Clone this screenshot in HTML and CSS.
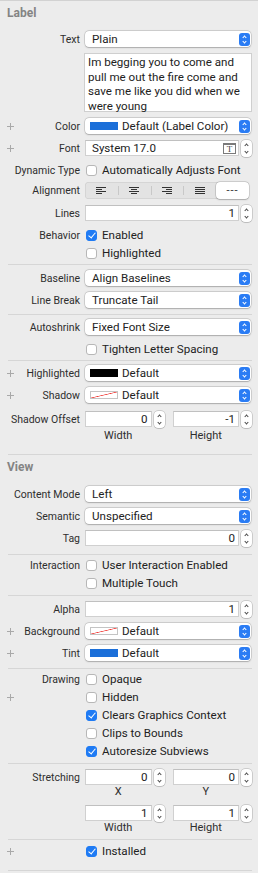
FILE: index.html
```html
<!DOCTYPE html>
<html lang="en">
<head>
    <meta charset="UTF-8">
    <meta name="viewport" content="width=device-width, initial-scale=1.0">
    <title>Attributes Inspector</title>
    <link rel="stylesheet" href="styles.css">
</head>
<body>
<div class="panel">
    <!-- Label section -->
    <div class="group g-label">
        <div class="header">Label</div>
        <div class="row">
            <div class="lbl">Text</div>
            <div class="popup"><span class="val">Plain</span><span class="updown"></span></div>
        </div>
        <div class="textbox">Im begging you to come and pull me out the fire come and save me like you did when we were young</div>
        <div class="row gap3">
            <div class="lbl"><i class="plus"></i>Color</div>
            <div class="popup color"><span class="swatch blue"></span><span class="val">Default (Label Color)</span><span class="updown"></span></div>
        </div>
        <div class="row">
            <div class="lbl"><i class="plus"></i>Font</div>
            <div class="field font"><span>System 17.0</span><span class="t-icon">T</span></div>
            <span class="stepper"></span>
        </div>
        <div class="row">
            <div class="lbl">Dynamic Type</div>
            <span class="box"></span><span class="val">Automatically Adjusts Font</span>
        </div>
        <div class="row short">
            <div class="lbl">Alignment</div>
            <div class="seg">
                <span class="seg-item">
                    <svg width="10" height="7" viewBox="0 0 10 7"><path d="M0 .5h10M0 2.5h6M0 4.5h10M0 6.5h6" stroke="#333" stroke-width="1"/></svg>
                </span>
                <span class="seg-item">
                    <svg width="10" height="7" viewBox="0 0 10 7"><path d="M0 .5h10M2 2.5h6M0 4.5h10M2 6.5h6" stroke="#333" stroke-width="1"/></svg>
                </span>
                <span class="seg-item">
                    <svg width="10" height="7" viewBox="0 0 10 7"><path d="M0 .5h10M4 2.5h6M0 4.5h10M4 6.5h6" stroke="#333" stroke-width="1"/></svg>
                </span>
                <span class="seg-item">
                    <svg width="10" height="7" viewBox="0 0 10 7"><path d="M0 .5h10M0 2.5h10M0 4.5h10M0 6.5h10" stroke="#333" stroke-width="1"/></svg>
                </span>
                <span class="seg-item selected">---</span>
            </div>
        </div>
        <div class="row gap3">
            <div class="lbl">Lines</div>
            <div class="field">1</div>
            <span class="stepper"></span>
        </div>
        <div class="row check gap2">
            <div class="lbl">Behavior</div>
            <span class="box on"></span><span class="val">Enabled</span>
        </div>
        <div class="row check">
            <div class="lbl"></div>
            <span class="box"></span><span class="val">Highlighted</span>
        </div>
    </div>
    <div class="sep"></div>

    <div class="group g-baseline">
        <div class="row">
            <div class="lbl">Baseline</div>
            <div class="popup"><span class="val">Align Baselines</span><span class="updown"></span></div>
        </div>
        <div class="row">
            <div class="lbl">Line Break</div>
            <div class="popup"><span class="val">Truncate Tail</span><span class="updown"></span></div>
        </div>
    </div>
    <div class="sep"></div>

    <div class="group g-shrink">
        <div class="row">
            <div class="lbl">Autoshrink</div>
            <div class="popup"><span class="val">Fixed Font Size</span><span class="updown"></span></div>
        </div>
        <div class="row">
            <div class="lbl"></div>
            <span class="box"></span><span class="val">Tighten Letter Spacing</span>
        </div>
    </div>
    <div class="sep"></div>

    <div class="group g-shadow">
        <div class="row">
            <div class="lbl"><i class="plus"></i>Highlighted</div>
            <div class="popup color"><span class="swatch black"></span><span class="val">Default</span><span class="updown"></span></div>
        </div>
        <div class="row">
            <div class="lbl"><i class="plus"></i>Shadow</div>
            <div class="popup color"><span class="swatch none"></span><span class="val">Default</span><span class="updown"></span></div>
        </div>
        <div class="row gap2">
            <div class="lbl">Shadow Offset</div>
            <div class="pair">
                <div class="num"><div class="field">0</div><span class="stepper"></span></div>
                <div class="num"><div class="field">-1</div><span class="stepper"></span></div>
            </div>
        </div>
        <div class="sub">
            <span>Width</span><span>Height</span>
        </div>
    </div>
    <div class="sep"></div>

    <!-- View section -->
    <div class="group g-view">
        <div class="header view">View</div>
        <div class="row gap2">
            <div class="lbl">Content Mode</div>
            <div class="popup"><span class="val">Left</span><span class="updown"></span></div>
        </div>
        <div class="row">
            <div class="lbl">Semantic</div>
            <div class="popup"><span class="val">Unspecified</span><span class="updown"></span></div>
        </div>
        <div class="row">
            <div class="lbl">Tag</div>
            <div class="field">0</div>
            <span class="stepper"></span>
        </div>
    </div>
    <div class="sep"></div>

    <div class="group g-interaction">
        <div class="row check">
            <div class="lbl">Interaction</div>
            <span class="box"></span><span class="val">User Interaction Enabled</span>
        </div>
        <div class="row check">
            <div class="lbl"></div>
            <span class="box"></span><span class="val">Multiple Touch</span>
        </div>
    </div>
    <div class="sep"></div>

    <div class="group g-alpha">
        <div class="row">
            <div class="lbl">Alpha</div>
            <div class="field">1</div>
            <span class="stepper"></span>
        </div>
        <div class="row">
            <div class="lbl"><i class="plus"></i>Background</div>
            <div class="popup color"><span class="swatch none"></span><span class="val">Default</span><span class="updown"></span></div>
        </div>
        <div class="row">
            <div class="lbl"><i class="plus"></i>Tint</div>
            <div class="popup color"><span class="swatch blue"></span><span class="val">Default</span><span class="updown"></span></div>
        </div>
    </div>
    <div class="sep"></div>

    <div class="group g-drawing">
        <div class="row check">
            <div class="lbl">Drawing</div>
            <span class="box"></span><span class="val">Opaque</span>
        </div>
        <div class="row check">
            <div class="lbl"><i class="plus"></i></div>
            <span class="box"></span><span class="val">Hidden</span>
        </div>
        <div class="row check">
            <div class="lbl"></div>
            <span class="box on"></span><span class="val">Clears Graphics Context</span>
        </div>
        <div class="row check">
            <div class="lbl"></div>
            <span class="box"></span><span class="val">Clips to Bounds</span>
        </div>
        <div class="row check">
            <div class="lbl"></div>
            <span class="box on"></span><span class="val">Autoresize Subviews</span>
        </div>
    </div>
    <div class="sep"></div>

    <div class="group g-stretch">
        <div class="row">
            <div class="lbl">Stretching</div>
            <div class="pair">
                <div class="num"><div class="field">0</div><span class="stepper"></span></div>
                <div class="num"><div class="field">0</div><span class="stepper"></span></div>
            </div>
        </div>
        <div class="sub tight">
            <span>X</span><span>Y</span>
        </div>
        <div class="row gap4">
            <div class="lbl"></div>
            <div class="pair">
                <div class="num"><div class="field">1</div><span class="stepper"></span></div>
                <div class="num"><div class="field">1</div><span class="stepper"></span></div>
            </div>
        </div>
        <div class="sub tight">
            <span>Width</span><span>Height</span>
        </div>
    </div>
    <div class="sep"></div>

    <div class="group g-installed">
        <div class="row check">
            <div class="lbl"><i class="plus"></i></div>
            <span class="box on"></span><span class="val">Installed</span>
        </div>
    </div>
    <div class="sep"></div>
</div>
</body>
</html>
```

FILE: styles.css
```css
body {
    margin: 0;
    background: #ececec;
    font-family: Roboto, "Liberation Sans", sans-serif;
    font-size: 10.5px;
    color: #2e2e2e;
}
.panel {
    border-top: 1px solid #d2d2d2;
    padding-right: 6px;
}
.header {
    height: 27px;
    line-height: 25px;
    padding-left: 7px;
    font-size: 12px;
    font-weight: bold;
    color: #848484;
}
.header.view {
    height: 26px;
    line-height: 24px;
}
.sep {
    height: 1px;
    margin-left: 8px;
    background: #d6d6d6;
}

/* group spacing */
.g-label { padding-bottom: 2px; }
.g-baseline { padding: 2px 0 3px; }
.g-shrink { padding-top: 1px; }
.g-shadow { padding: 1px 0 12px; }
.g-view { padding-bottom: 5px; }
.g-interaction { padding: 1px 0 3px; }
.g-alpha { padding: 2px 0 4px; }
.g-drawing { padding: 1px 0 3px; }
.g-stretch { padding: 2px 0 5px; }
.g-installed { padding: 2px 0 10px; }

.row {
    display: flex;
    align-items: center;
    height: 22px;
}
.row.check {
    height: 18px;
}
.row.short {
    height: 18px;
}
.gap2 { margin-top: 2px; }
.gap3 { margin-top: 3px; }
.gap4 { margin-top: 4px; }

.lbl {
    width: 85px;
    flex: none;
    box-sizing: border-box;
    padding: 0 5px 0 7px;
    display: flex;
    align-items: center;
    justify-content: flex-end;
    white-space: nowrap;
}
.plus {
    position: relative;
    width: 7px;
    height: 7px;
    margin-right: auto;
}
.plus::before,
.plus::after {
    content: "";
    position: absolute;
    background: #a9a9a9;
}
.plus::before {
    left: 0;
    top: 3px;
    width: 7px;
    height: 1px;
}
.plus::after {
    left: 3px;
    top: 0;
    width: 1px;
    height: 7px;
}

.val {
    font-size: 11.6px;
    color: #222;
    white-space: nowrap;
}

/* pop-up buttons */
.popup {
    flex: 1;
    height: 16px;
    margin-right: 1px;
    padding: 0 1px 0 7px;
    display: flex;
    align-items: center;
    background: #fff;
    border-radius: 4px;
    box-shadow: 0 0 0 0.5px rgba(0, 0, 0, 0.2), 0 0.5px 1.5px rgba(0, 0, 0, 0.2);
}
.popup .val {
    flex: 1;
}
.popup.color {
    padding-left: 5px;
}
.updown {
    position: relative;
    width: 11px;
    height: 13px;
    flex: none;
    border-radius: 3px;
    background: #2a7cf4;
}
.updown::before,
.updown::after {
    content: "";
    position: absolute;
    left: 4px;
    width: 2px;
    height: 2px;
    border: solid #fff;
    border-width: 1.2px 0 0 1.2px;
}
.updown::before {
    top: 3px;
    transform: rotate(45deg);
}
.updown::after {
    bottom: 3px;
    transform: rotate(225deg);
}

.swatch {
    width: 28px;
    height: 8px;
    flex: none;
    margin-right: 4px;
    box-sizing: border-box;
}
.swatch.blue { background: #1b6fd9; }
.swatch.black { background: #000; }
.swatch.none {
    border: 1px solid #c4c4c4;
    background: linear-gradient(to bottom right, transparent calc(50% - 0.7px), #f0403c 50%, transparent calc(50% + 0.7px)), #fff;
}

/* text and number fields */
.textbox {
    margin: 3px 0 0 84px;
    height: 59px;
    box-sizing: border-box;
    padding: 1px 3px;
    background: #fff;
    border: 1px solid #cfcfcf;
    font-size: 11.6px;
    line-height: 14.5px;
    color: #222;
}
.field {
    flex: 1;
    min-width: 0;
    height: 16px;
    box-sizing: border-box;
    padding-right: 3px;
    display: flex;
    align-items: center;
    justify-content: flex-end;
    background: #fff;
    border: 1px solid #d0d0d0;
    border-top-color: #c0c0c0;
    font-size: 11.6px;
    color: #222;
}
.field.font {
    justify-content: space-between;
    padding: 0 2px 0 6px;
}
.t-icon {
    width: 13px;
    height: 11px;
    box-sizing: border-box;
    border: 1px solid #7a7a7a;
    border-top-width: 2px;
    font-family: "Liberation Serif", serif;
    font-size: 9px;
    line-height: 8px;
    text-align: center;
    color: #444;
}
.stepper {
    position: relative;
    width: 11px;
    height: 17px;
    flex: none;
    margin-left: 2px;
    border-radius: 4px;
    background: #fff;
    box-shadow: 0 0 0 0.5px rgba(0, 0, 0, 0.25), 0 0.5px 1px rgba(0, 0, 0, 0.15);
}
.stepper::before,
.stepper::after {
    content: "";
    position: absolute;
    left: 4px;
    width: 2px;
    height: 2px;
    border: solid #4a4a4a;
    border-width: 1.2px 0 0 1.2px;
}
.stepper::before {
    top: 4px;
    transform: rotate(45deg);
}
.stepper::after {
    bottom: 4px;
    transform: rotate(225deg);
}

.pair {
    flex: 1;
    display: grid;
    grid-template-columns: 1fr 1fr;
    column-gap: 8px;
}
.num {
    display: flex;
    align-items: center;
}
.sub {
    display: grid;
    grid-template-columns: 1fr 1fr;
    column-gap: 8px;
    padding-left: 85px;
    font-size: 11px;
    line-height: 12px;
    color: #2e2e2e;
}
.sub span {
    padding-right: 13px;
    text-align: center;
}
.sub.tight {
    margin-top: -2px;
}

/* checkboxes */
.box {
    position: relative;
    width: 11px;
    height: 11px;
    flex: none;
    box-sizing: border-box;
    margin: 0 5px 0 1px;
    border: 1px solid #b7b7b7;
    border-radius: 3px;
    background: #fff;
}
.box.on {
    border-color: #1f7bf4;
    background: #1f7bf4;
}
.box.on::after {
    content: "";
    position: absolute;
    left: 3px;
    top: 0;
    width: 3px;
    height: 6px;
    border: solid #fff;
    border-width: 0 1.5px 1.5px 0;
    transform: rotate(40deg);
}

/* segmented control */
.seg {
    flex: 1;
    height: 17px;
    margin-right: 3px;
    display: flex;
    border-radius: 4px;
    background: #e3e3e3;
    box-shadow: inset 0 0 0 0.5px rgba(0, 0, 0, 0.12);
}
.seg-item {
    flex: 1;
    position: relative;
    display: flex;
    align-items: center;
    justify-content: center;
}
.seg-item + .seg-item::before {
    content: "";
    position: absolute;
    left: 0;
    top: 4px;
    width: 1px;
    height: 9px;
    background: #c8c8c8;
}
.seg-item.selected {
    background: #fff;
    border-radius: 4px;
    box-shadow: 0 0 0 0.5px rgba(0, 0, 0, 0.2), 0 0.5px 1.5px rgba(0, 0, 0, 0.2);
    font-size: 11px;
    letter-spacing: 1px;
    color: #333;
}
.seg-item.selected::before {
    display: none;
}
```
